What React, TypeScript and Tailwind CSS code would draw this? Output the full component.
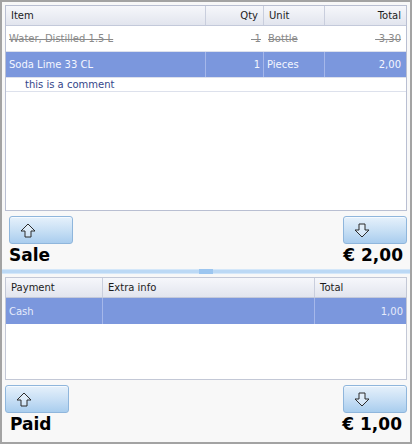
import React from 'react';

const UpArrow = () => (
  <svg width="16" height="15" viewBox="0 0 16 15">
    <path d="M8 1 L15 8 L11 8 L11 14 L5 14 L5 8 L1 8 Z" fill="#fff" fillOpacity="0.35" stroke="#2b2b2b" strokeWidth="1" strokeLinejoin="miter" />
  </svg>
);

const DownArrow = () => (
  <svg width="16" height="15" viewBox="0 0 16 15">
    <path d="M5 1 L11 1 L11 7 L15 7 L8 14 L1 7 L5 7 Z" fill="#fff" fillOpacity="0.35" stroke="#2b2b2b" strokeWidth="1" strokeLinejoin="miter" />
  </svg>
);

const NavButton: React.FC<{ dir: 'up' | 'down' }> = ({ dir }) => (
  <button className="w-[64px] h-[28px] rounded-[3px] border border-[#8fb6dc] bg-gradient-to-b from-[#e6f1fb] via-[#c9e0f5] to-[#a9cdee] shadow-[inset_0_1px_0_#f5faff] flex items-center pl-[10px]">
    {dir === 'up' ? <UpArrow /> : <DownArrow />}
  </button>
);

const headCell = 'h-full flex items-center px-[5px] border-r border-[#c9cedd] last:border-r-0';

const App: React.FC = () => {
  return (
    <div className="w-[412px] h-[444px] border-2 border-[#a3a3a3] bg-[#f8f8f8] flex flex-col font-['DejaVu_Sans',sans-serif] text-[10px] text-[#222]">
      {/* Sale pane */}
      <div className="flex flex-col px-[3px] pt-[3px]">
        <div className="h-[206px] border border-[#b9bfd2] bg-white flex flex-col">
          <div className="h-[20px] flex bg-gradient-to-b from-[#f6f7fb] to-[#e2e5ee] border-b border-[#c3c9da] text-[#1c1c1c]">
            <div className={`${headCell} w-[200px]`}>Item</div>
            <div className={`${headCell} w-[58px] justify-end`}>Qty</div>
            <div className={`${headCell} w-[61px]`}>Unit</div>
            <div className={`${headCell} flex-1 justify-end`}>Total</div>
          </div>
          <div className="h-[26px] flex items-center border-b border-[#dde1ec] text-[#8a8a8a] line-through">
            <div className="w-[200px] px-[3px]">Water, Distilled 1.5 L</div>
            <div className="w-[58px] px-[3px] text-right">-1</div>
            <div className="w-[61px] px-[4px]">Bottle</div>
            <div className="flex-1 px-[5px] text-right">-3,30</div>
          </div>
          <div className="h-[26px] flex bg-[#7b97dd] text-[#f4f6ff] border-b border-[#dde1ec]">
            <div className="w-[200px] px-[3px] flex items-center border-r border-[#a5b7ea]">Soda Lime 33 CL</div>
            <div className="w-[58px] px-[3px] flex items-center justify-end border-r border-[#a5b7ea]">1</div>
            <div className="w-[61px] px-[3px] flex items-center border-r border-[#a5b7ea]">Pieces</div>
            <div className="flex-1 px-[5px] flex items-center justify-end">2,00</div>
          </div>
          <div className="h-[14px] flex items-center pl-[19px] text-[#34468a] border-b border-[#dde1ec]">this is a comment</div>
        </div>
        <div className="flex justify-between mt-[5px] pl-[4px]">
          <NavButton dir="up" />
          <NavButton dir="down" />
        </div>
        <div className="flex justify-between items-center h-[24px] px-[4px] font-bold text-[17px] text-black">
          <span>Sale</span>
          <span>€ 2,00</span>
        </div>
      </div>

      {/* Splitter */}
      <div className="mt-[1px] h-[5px] flex items-center justify-center bg-[#bcd9f5] border-y border-[#d4e7f9]">
        <div className="w-[14px] h-[5px] bg-[#9cc6f0]" />
      </div>

      {/* Payment pane */}
      <div className="flex flex-col px-[3px] pt-[3px] flex-1">
        <div className="h-[103px] border border-[#c3c8d6] bg-white flex flex-col">
          <div className="h-[20px] flex bg-gradient-to-b from-[#f6f7fb] to-[#e2e5ee] border-b border-[#c3c9da] text-[#1c1c1c]">
            <div className={`${headCell} w-[97px]`}>Payment</div>
            <div className={`${headCell} w-[212px]`}>Extra info</div>
            <div className={`${headCell} flex-1`}>Total</div>
          </div>
          <div className="h-[26px] flex bg-[#7b97dd] text-[#e6ebfb]">
            <div className="w-[97px] px-[3px] flex items-center border-r border-[#a5b7ea]">Cash</div>
            <div className="w-[212px] border-r border-[#a5b7ea]" />
            <div className="flex-1 px-[3px] flex items-center justify-end">1,00</div>
          </div>
        </div>
        <div className="flex justify-between mt-[5px]">
          <NavButton dir="up" />
          <NavButton dir="down" />
        </div>
        <div className="flex justify-between items-center h-[24px] px-[5px] font-bold text-[17px] text-black">
          <span>Paid</span>
          <span>€ 1,00</span>
        </div>
      </div>
    </div>
  );
};

export default App;
